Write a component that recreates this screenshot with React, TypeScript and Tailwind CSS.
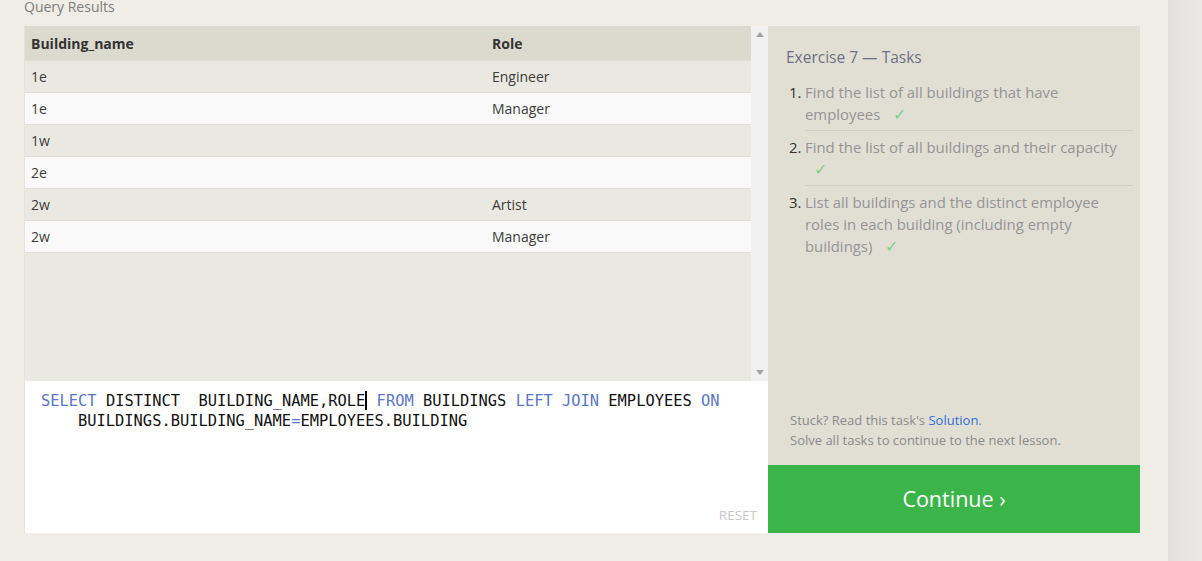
import React from "react";

const rows: [string, string][] = [
  ["1e", "Engineer"],
  ["1e", "Manager"],
  ["1w", ""],
  ["2e", ""],
  ["2w", "Artist"],
  ["2w", "Manager"],
];

const ui = { fontFamily: '"Open Sans", "Noto Sans", sans-serif' };
const mono = { fontFamily: '"DejaVu Sans Mono", "Liberation Mono", monospace' };

function Check() {
  return <span className="ml-[9px] text-[16px] text-[#7fcf88]">✓</span>;
}

export default function App() {
  return (
    <div className="w-[1202px] h-[561px] overflow-hidden flex bg-[#efede6]" style={ui}>
      <div className="w-[1168px] pl-[24px] flex flex-col">
        <div className="h-[30px] -mt-[4px] text-[14px] leading-[22px] text-[#7d7d7d]">Query Results</div>
        <div className="flex">
          <div className="w-[744px] flex flex-col border-l border-[#e4e2da]">
            <div className="h-[355px] flex bg-[#eae9e1]">
              <div className="flex-1 flex flex-col text-[14px] text-[#3c3c3c]">
                <div className="h-[34px] flex items-center bg-[#dbdacf] font-bold text-[#333]">
                  <div className="w-[461px] pl-[6px]">Building_name</div>
                  <div className="pl-[6px]">Role</div>
                </div>
                {rows.map(([b, r], i) => (
                  <div
                    key={i}
                    className={
                      "h-[32px] flex items-center border-t border-[#dfded6] " +
                      (i % 2 === 0 ? "bg-[#eae9e1]" : "bg-[#f9f9f9]")
                    }
                  >
                    <div className="w-[461px] pl-[6px]">{b}</div>
                    <div className="pl-[6px]">{r}</div>
                  </div>
                ))}
                <div className="border-t border-[#dfded6]" />
              </div>
              <div className="w-[17px] bg-[#f1f1f1] flex flex-col justify-between items-center py-[6px]">
                <svg width="8" height="5" viewBox="0 0 8 5"><path d="M4 0 L8 5 L0 5 Z" fill="#a3a3a3" /></svg>
                <svg width="8" height="5" viewBox="0 0 8 5"><path d="M0 0 L8 0 L4 5 Z" fill="#a3a3a3" /></svg>
              </div>
            </div>
            <div className="h-[152px] bg-white relative pt-[10px] pl-[16px] text-[15.4px] leading-[20px] text-[#111]" style={mono}>
              <div className="whitespace-pre">
                <span className="text-[#5a77c6]">SELECT</span> DISTINCT  BUILDING_NAME,ROLE
                <span className="inline-block w-0 h-[19px] align-[-4px] border-l-[2px] border-black" /> <span className="text-[#5a77c6]">FROM</span> BUILDINGS <span className="text-[#5a77c6]">LEFT</span> <span className="text-[#5a77c6]">JOIN</span> EMPLOYEES <span className="text-[#5a77c6]">ON</span>
              </div>
              <div className="whitespace-pre pl-[37px]">
                BUILDINGS.BUILDING_NAME<span className="text-[#5a77c6]">=</span>EMPLOYEES.BUILDING
              </div>
              <div className="absolute right-[11px] bottom-[8px] text-[13.5px] text-[#c8c8c8]" style={ui}>RESET</div>
            </div>
          </div>
          <div className="w-[372px] flex flex-col">
            <div className="h-[439px] bg-[#e1dfd4] flex flex-col pl-[18px] pr-[7px]">
              <div className="pt-[19px] text-[15.5px] leading-[24px] text-[#6c7183]">Exercise 7 — Tasks</div>
              <ol className="mt-[12px] text-[14.9px] leading-[22px] text-[#949494]">
                <li className="flex pb-[5px]">
                  <span className="w-[19px] pl-[3px] text-[#333]">1.</span>
                  <div className="flex-1 border-b border-[#d2d0c5] pb-[5px]">
                    Find the list of all buildings that have employees{" "}
                    <Check />
                  </div>
                </li>
                <li className="flex pb-[5px]">
                  <span className="w-[19px] pl-[3px] text-[#333]">2.</span>
                  <div className="flex-1 border-b border-[#d2d0c5] pb-[5px]">
                    Find the list of all buildings and their capacity{" "}
                    <Check />
                  </div>
                </li>
                <li className="flex">
                  <span className="w-[19px] pl-[3px] text-[#333]">3.</span>
                  <div className="flex-1 pr-[8px]">
                    List all buildings and the distinct employee roles in each building (including empty buildings){" "}
                    <Check />
                  </div>
                </li>
              </ol>
              <div className="mt-auto pb-[15px] pl-[4px] text-[13px] leading-[20px] text-[#8a8a8a]">
                <div>
                  Stuck? Read this task's <span className="text-[#2f6fd6]">Solution</span>.
                </div>
                <div>Solve all tasks to continue to the next lesson.</div>
              </div>
            </div>
            <div className="h-[68px] bg-[#3bb54a] flex items-center justify-center text-white text-[21.5px]">
              Continue ›
            </div>
          </div>
        </div>
      </div>
      <div className="w-[34px] bg-gradient-to-r from-[#e3e0dd] to-[#ebe8e5]" />
    </div>
  );
}
